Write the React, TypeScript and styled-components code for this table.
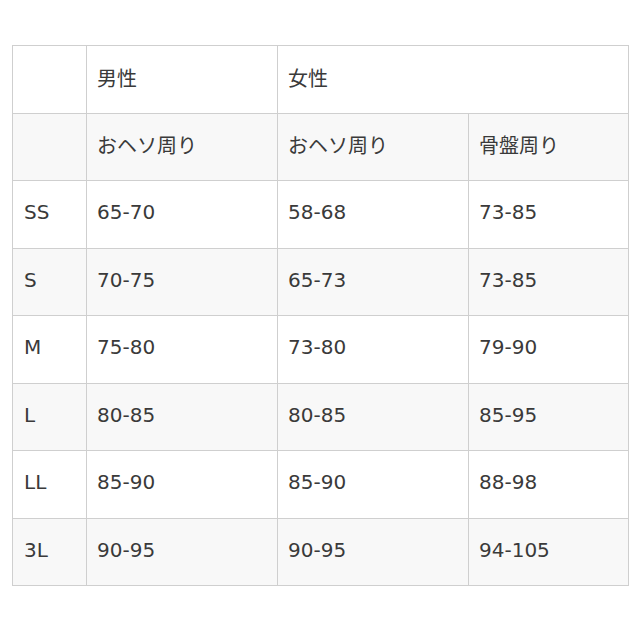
import React from "react";
import styled, { createGlobalStyle } from "styled-components";

const Global = createGlobalStyle`
  html, body { margin: 0; padding: 0; background: #ffffff; }
`;

const Page = styled.div`
  padding: 45px 12px 0 12px;
`;

const Table = styled.table`
  border-collapse: collapse;
  width: 616px;
  table-layout: fixed;
  font-family: "DejaVu Sans", "Noto Sans CJK JP", sans-serif;
  font-size: 20px;
  color: #3a3a3a;
`;

const Row = styled.tr<{ $shade?: boolean }>`
  background: ${(p) => (p.$shade ? "#f8f8f8" : "#ffffff")};
`;

const Cell = styled.td`
  border: 1px solid #cfcfcf;
  height: 62.5px;
  padding: 0 10px 4px 10px;
  vertical-align: middle;
  text-align: left;
  white-space: nowrap;
`;

const SizeCell = styled(Cell)`
  padding-left: 11px;
`;

const rows: [string, string, string, string][] = [
  ["SS", "65-70", "58-68", "73-85"],
  ["S", "70-75", "65-73", "73-85"],
  ["M", "75-80", "73-80", "79-90"],
  ["L", "80-85", "80-85", "85-95"],
  ["LL", "85-90", "85-90", "88-98"],
  ["3L", "90-95", "90-95", "94-105"],
];

export default function App() {
  return (
    <Page>
      <Global />
      <Table>
        <colgroup>
          <col style={{ width: 74 }} />
          <col style={{ width: 191 }} />
          <col style={{ width: 191 }} />
          <col style={{ width: 160 }} />
        </colgroup>
        <tbody>
          <Row>
            <SizeCell />
            <Cell>男性</Cell>
            <Cell colSpan={2}>女性</Cell>
          </Row>
          <Row $shade>
            <SizeCell />
            <Cell>おヘソ周り</Cell>
            <Cell>おヘソ周り</Cell>
            <Cell>骨盤周り</Cell>
          </Row>
          {rows.map((r, i) => (
            <Row key={r[0]} $shade={i % 2 === 1}>
              <SizeCell>{r[0]}</SizeCell>
              <Cell>{r[1]}</Cell>
              <Cell>{r[2]}</Cell>
              <Cell>{r[3]}</Cell>
            </Row>
          ))}
        </tbody>
      </Table>
    </Page>
  );
}
